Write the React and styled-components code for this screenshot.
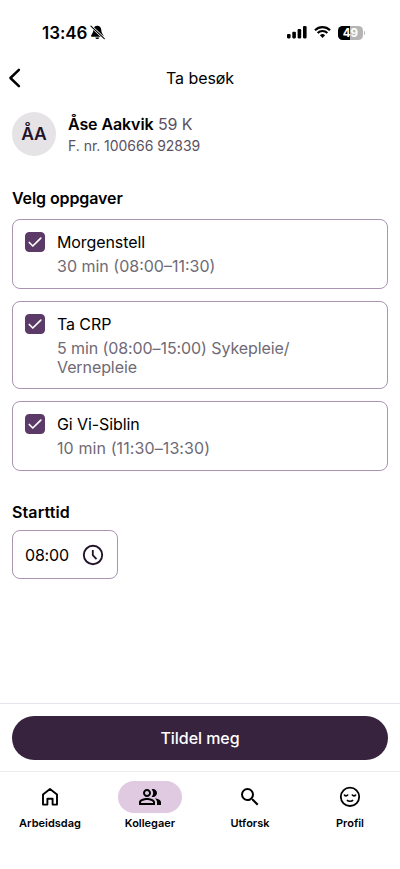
import React, { useState } from "react";
import styled, { createGlobalStyle } from "styled-components";
import { MdOutlinePeopleAlt, MdSearch } from "react-icons/md";

const colors = {
  text: "#000000",
  muted: "#6f6a75",
  subtle: "#5a5260",
  border: "#ab94b2",
  primary: "#5b3a68",
  dark: "#38233f",
  active: "#dfcae2",
  avatar: "#e5e3e6",
  line: "#e8e3ec",
};

const GlobalStyle = createGlobalStyle`
  * {
    box-sizing: border-box;
  }
  body {
    margin: 0;
    background: #ffffff;
    color: ${colors.text};
    font-family: Inter, "Liberation Sans", sans-serif;
  }
  button {
    padding: 0;
    border: 0;
    background: none;
    color: inherit;
    font-family: inherit;
    cursor: pointer;
  }
  svg {
    display: block;
    flex-shrink: 0;
  }
`;

const Screen = styled.div`
  display: flex;
  flex-direction: column;
  width: 100%;
  height: 100vh;
  overflow: hidden;
`;

const StatusBar = styled.div`
  display: flex;
  align-items: center;
  justify-content: space-between;
  height: 56px;
  padding: 9px 35px 0 42px;
`;

const StatusGroup = styled.div`
  display: flex;
  align-items: center;
  gap: ${(props) => props.$gap}px;
`;

const Clock = styled.span`
  font-size: 17px;
  line-height: 20px;
  font-weight: 600;
  letter-spacing: -0.05px;
`;

const Battery = styled.div`
  display: flex;
  align-items: center;
  gap: 1px;
  &::after {
    content: "";
    width: 1px;
    height: 4px;
    border-radius: 0 1px 1px 0;
    background: #b8b8b8;
  }
`;

const BatteryLevel = styled.div`
  width: 25.5px;
  height: 14px;
  border-radius: 4.5px;
  background: linear-gradient(90deg, #000 49%, #b5b5b5 49%);
  color: #fff;
  font-size: 11.5px;
  line-height: 14px;
  font-weight: 700;
  text-align: center;
`;

const Header = styled.header`
  display: grid;
  grid-template-columns: 40px 1fr 40px;
  align-items: center;
  height: 44px;
`;

const BackButton = styled.button`
  padding-left: 8px;
`;

const Title = styled.h1`
  margin: 0;
  font-size: 16px;
  line-height: 20px;
  font-weight: 400;
  letter-spacing: -0.05px;
  text-align: center;
`;

const Content = styled.main`
  flex: 1;
  padding: 12px 12px 0;
`;

const Patient = styled.div`
  display: flex;
  align-items: center;
  gap: 12px;
  height: 44px;
`;

const Avatar = styled.div`
  width: 44px;
  height: 44px;
  border-radius: 50%;
  background: ${colors.avatar};
  color: #21142a;
  font-size: 17.5px;
  line-height: 44px;
  font-weight: 600;
  text-align: center;
`;

const PatientName = styled.div`
  font-size: 16px;
  line-height: 24px;
  letter-spacing: -0.1px;
  color: ${colors.subtle};
  strong {
    color: ${colors.text};
    font-weight: 600;
  }
`;

const PatientId = styled.div`
  font-size: 14px;
  line-height: 20px;
  letter-spacing: -0.04px;
  color: ${colors.subtle};
`;

const SectionTitle = styled.h2`
  margin: ${(props) => props.$top}px 0 ${(props) => props.$bottom}px;
  font-size: 16px;
  line-height: 20px;
  font-weight: 600;
  letter-spacing: ${(props) => props.$tracking || 0}px;
`;

const TaskList = styled.div`
  display: flex;
  flex-direction: column;
  gap: 12px;
`;

const TaskCard = styled.button`
  display: flex;
  align-items: flex-start;
  gap: 12px;
  min-height: 69.4px;
  padding: 12px 12px 11.4px;
  border: 1px solid ${colors.border};
  border-radius: 8px;
  text-align: left;
`;

const Checkbox = styled.span`
  display: flex;
  align-items: center;
  justify-content: center;
  width: 20px;
  height: 20px;
  border: 1px solid ${colors.primary};
  border-radius: 4px;
  background: ${(props) => (props.$checked ? colors.primary : "#fff")};
`;

const TaskText = styled.span`
  display: flex;
  flex-direction: column;
  gap: 4px;
  width: 262px;
  font-size: 16px;
  line-height: 20px;
  letter-spacing: -0.09px;
`;

const TaskDetails = styled.span`
  color: ${colors.muted};
  line-height: 19px;
  padding-top: 1px;
  letter-spacing: ${(props) => props.$tracking}px;
`;

const TimeField = styled.button`
  display: flex;
  align-items: center;
  justify-content: space-between;
  width: 106px;
  height: 49px;
  padding: 0 12px;
  border: 1px solid ${colors.border};
  border-radius: 8px;
  font-size: 16px;
  letter-spacing: -0.2px;
`;

const ActionBar = styled.div`
  height: 68px;
  padding: 12px;
  border-top: 1px solid ${colors.line};
`;

const AssignButton = styled.button`
  width: 100%;
  height: 44px;
  border-radius: 22px;
  background: ${colors.dark};
  color: #fff;
  font-size: 16px;
  font-weight: 500;
  letter-spacing: -0.05px;
`;

const NavBar = styled.nav`
  display: grid;
  grid-template-columns: repeat(4, 1fr);
  height: 98px;
  padding-top: 9px;
  border-top: 1px solid #eeecf0;
`;

const NavItem = styled.button`
  display: flex;
  flex-direction: column;
  align-items: center;
  align-self: start;
  gap: 3px;
  font-size: 11px;
  line-height: 14px;
  font-weight: 600;
`;

const NavIcon = styled.span`
  display: flex;
  align-items: center;
  justify-content: center;
  width: 64px;
  height: 32px;
  border-radius: 16px;
  background: ${(props) => (props.$active ? colors.active : "transparent")};
`;

const BellOffIcon = () => (
  <svg width="15" height="15" viewBox="0 0 15 15">
    <path
      d="M7.3.8C4.7.8 3.5 2.7 3.3 5.1 3.1 8 2.3 8.6 1.3 10.2c-.5.8-.1 1.5.7 1.5h10.6c.9 0 1.2-.7.7-1.5-1-1.6-1.8-2.2-2-5.1C11.1 2.7 9.9.8 7.3.8Z"
      fill="#000"
    />
    <path d="M5.3 12.5h4c-.3 1-1 1.6-2 1.6s-1.7-.6-2-1.6Z" fill="#000" />
    <path d="M.9 1.1 14.3 13.6" stroke="#fff" strokeWidth="2.6" />
    <path d="M.9 1.1 14.3 13.6" stroke="#000" strokeWidth="1.1" strokeLinecap="round" />
  </svg>
);

const SignalIcon = () => (
  <svg width="20" height="13" viewBox="0 0 20 13">
    <rect x="0" y="8" width="3.6" height="4.4" rx="1.1" />
    <rect x="5.3" y="5.7" width="3.6" height="6.7" rx="1.1" />
    <rect x="10.6" y="3.1" width="3.6" height="9.3" rx="1.1" />
    <rect x="16" y="0" width="3.6" height="12.4" rx="1.1" />
  </svg>
);

const WifiIcon = () => (
  <svg width="17" height="13" viewBox="0 0 17 13" fill="none" stroke="#000">
    <path d="M1 4.2a10.8 10.8 0 0 1 15 0" strokeWidth="2.2" />
    <path d="M3.6 7a7 7 0 0 1 9.8 0" strokeWidth="2.1" />
    <path d="M5.9 9.3a3.8 3.8 0 0 1 5.2 0L8.5 12Z" fill="#000" stroke="none" />
  </svg>
);

const BackIcon = () => (
  <svg width="14" height="20" viewBox="0 0 14 20" fill="none">
    <path
      d="M10.9 1.9 2.4 10l8.5 8.2"
      stroke="#000"
      strokeWidth="2.5"
      strokeLinecap="round"
      strokeLinejoin="round"
    />
  </svg>
);

const CheckIcon = () => (
  <svg width="18" height="18" viewBox="0 0 18 18" fill="none">
    <path
      d="m3.3 9.5 3.5 3.5 8-7.8"
      stroke="#fff"
      strokeWidth="1.7"
      strokeLinecap="round"
      strokeLinejoin="round"
    />
  </svg>
);

const ClockIcon = () => (
  <svg width="24" height="24" viewBox="0 0 24 24" fill="none" stroke="#21142a">
    <circle cx="12" cy="12" r="9.2" strokeWidth="1.9" />
    <path d="M11.8 7v5.2l3.7 3.9" strokeWidth="1.8" />
  </svg>
);

const HomeIcon = () => (
  <svg width="24" height="24" viewBox="0 0 24 24" fill="none">
    <path
      d="M5 19.6h4.4v-5.9h5.2v5.9H19v-10L12 4.1 5 9.6v10Z"
      stroke="#000"
      strokeWidth="1.9"
      strokeLinejoin="round"
    />
  </svg>
);

const FaceIcon = () => (
  <svg width="24" height="24" viewBox="0 0 24 24" fill="none" stroke="#000">
    <circle cx="12" cy="11.8" r="9.2" strokeWidth="1.8" />
    <path
      d="M6.2 9.6c.5 1.7 3.2 1.7 3.8 0M14 9.6c.6 1.7 3.3 1.7 3.8 0M9 15c1.2 1.7 4.8 1.7 6 0"
      strokeWidth="1.6"
    />
  </svg>
);

const tasks = [
  { id: 1, name: "Morgenstell", details: "30 min (08:00–11:30)", tracking: 0 },
  {
    id: 2,
    name: "Ta CRP",
    details: "5 min (08:00–15:00) Sykepleie/ Vernepleie",
    tracking: -0.09,
  },
  { id: 3, name: "Gi Vi-Siblin", details: "10 min (11:30–13:30)", tracking: 0.1 },
];

const tabs = [
  { label: "Arbeidsdag", icon: <HomeIcon /> },
  { label: "Kollegaer", icon: <MdOutlinePeopleAlt size={24} /> },
  { label: "Utforsk", icon: <MdSearch size={24} /> },
  { label: "Profil", icon: <FaceIcon /> },
];

const App = () => {
  const [selected, setSelected] = useState([1, 2, 3]);
  const [activeTab, setActiveTab] = useState("Kollegaer");

  const toggleTask = (id) => {
    setSelected(
      selected.includes(id)
        ? selected.filter((item) => item !== id)
        : [...selected, id]
    );
  };

  return (
    <Screen>
      <GlobalStyle />
      <StatusBar>
        <StatusGroup $gap={3}>
          <Clock>13:46</Clock>
          <BellOffIcon />
        </StatusGroup>
        <StatusGroup $gap={7}>
          <SignalIcon />
          <WifiIcon />
          <Battery>
            <BatteryLevel>49</BatteryLevel>
          </Battery>
        </StatusGroup>
      </StatusBar>
      <Header>
        <BackButton aria-label="Tilbake">
          <BackIcon />
        </BackButton>
        <Title>Ta besøk</Title>
      </Header>
      <Content>
        <Patient>
          <Avatar>ÅA</Avatar>
          <div>
            <PatientName>
              <strong>Åse Aakvik</strong> 59 K
            </PatientName>
            <PatientId>F. nr. 100666 92839</PatientId>
          </div>
        </Patient>
        <SectionTitle $top={32} $bottom={11.4} $tracking={-0.1}>
          Velg oppgaver
        </SectionTitle>
        <TaskList>
          {tasks.map((task) => (
            <TaskCard key={task.id} onClick={() => toggleTask(task.id)}>
              <Checkbox $checked={selected.includes(task.id)}>
                <CheckIcon />
              </Checkbox>
              <TaskText>
                <span>{task.name}</span>
                <TaskDetails $tracking={task.tracking}>{task.details}</TaskDetails>
              </TaskText>
            </TaskCard>
          ))}
        </TaskList>
        <SectionTitle $top={31.6} $bottom={8} $tracking={0.12}>
          Starttid
        </SectionTitle>
        <TimeField>
          08:00
          <ClockIcon />
        </TimeField>
      </Content>
      <ActionBar>
        <AssignButton>Tildel meg</AssignButton>
      </ActionBar>
      <NavBar>
        {tabs.map((tab) => (
          <NavItem key={tab.label} onClick={() => setActiveTab(tab.label)}>
            <NavIcon $active={activeTab === tab.label}>{tab.icon}</NavIcon>
            {tab.label}
          </NavItem>
        ))}
      </NavBar>
    </Screen>
  );
};

export default App;
